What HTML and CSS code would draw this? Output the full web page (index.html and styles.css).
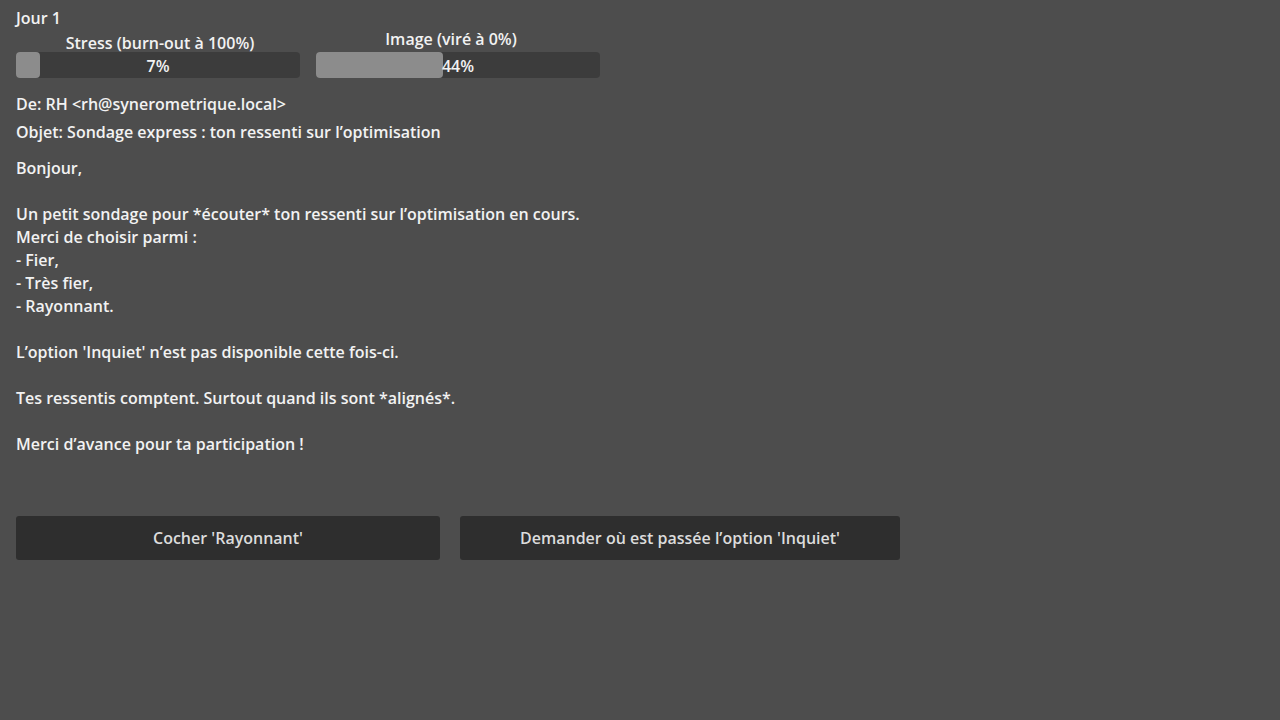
FILE: index.html
```html
<!DOCTYPE html>
<html lang="fr">

<head>
    <meta charset="UTF-8" />
    <title>Jour 1</title>
    <link rel="stylesheet" href="styles.css">
</head>

<body>
    <div class="day">Jour 1</div>

    <!-- Jauges -->
    <div class="stats">
        <div class="stat">
            <div class="stat-label stress">Stress (burn-out à 100%)</div>
            <div class="bar">
                <div class="bar-fill" style="width: 24px"></div>
                <span class="bar-value">7%</span>
            </div>
        </div>
        <div class="stat">
            <div class="stat-label image">Image (viré à 0%)</div>
            <div class="bar">
                <div class="bar-fill" style="width: 127px"></div>
                <span class="bar-value">44%</span>
            </div>
        </div>
    </div>

    <!-- Mail -->
    <div class="mail">
        <div class="mail-from">De: RH &lt;rh@synerometrique.local&gt;</div>
        <div class="mail-subject">Objet: Sondage express : ton ressenti sur l’optimisation</div>
        <div class="mail-body">Bonjour,

Un petit sondage pour *écouter* ton ressenti sur l’optimisation en cours.
Merci de choisir parmi :
- Fier,
- Très fier,
- Rayonnant.

L’option 'Inquiet' n’est pas disponible cette fois-ci.

Tes ressentis comptent. Surtout quand ils sont *alignés*.

Merci d’avance pour ta participation !</div>
    </div>

    <!-- Choix -->
    <div class="choices">
        <button class="choice choice-left">Cocher 'Rayonnant'</button>
        <button class="choice choice-right">Demander où est passée l’option 'Inquiet'</button>
    </div>
</body>

</html>
```

FILE: styles.css
```css
* {
    box-sizing: border-box;
}

body {
    margin: 0;
    padding: 7px 16px 0;
    background: #4d4d4d;
    color: #f2f2f2;
    font-family: "Open Sans", "DejaVu Sans", sans-serif;
    font-weight: 600;
    font-size: 16px;
    line-height: 23px;
}

.day {
    height: 23px;
}

.stats {
    display: flex;
    gap: 16px;
}

.stat {
    display: flex;
    flex-direction: column;
    width: 284px;
}

.stat-label {
    text-align: center;
    line-height: 18px;
}

.stat-label.stress {
    margin-top: 4px;
    padding-left: 4px;
}

.stat-label.image {
    margin-bottom: 4px;
    padding-right: 14px;
}

.bar {
    position: relative;
    height: 26px;
    background: #3c3c3c;
    border-radius: 4px;
}

.bar-fill {
    height: 100%;
    background: #8c8c8c;
    border-radius: 4px;
}

.bar-value {
    position: absolute;
    inset: 0;
    padding-top: 1px;
    text-align: center;
    line-height: 26px;
}

.mail {
    margin-top: 15px;
}

.mail-subject {
    margin-top: 5px;
}

.mail-body {
    margin-top: 13px;
    white-space: pre-wrap;
}

.choices {
    display: flex;
    gap: 20px;
    margin-top: 60px;
}

.choice {
    height: 44px;
    padding: 0;
    border: none;
    border-radius: 3px;
    background: #2e2e2e;
    color: #dcdcdc;
    font: inherit;
    cursor: pointer;
}

.choice-left {
    width: 424px;
}

.choice-right {
    width: 440px;
}
```
